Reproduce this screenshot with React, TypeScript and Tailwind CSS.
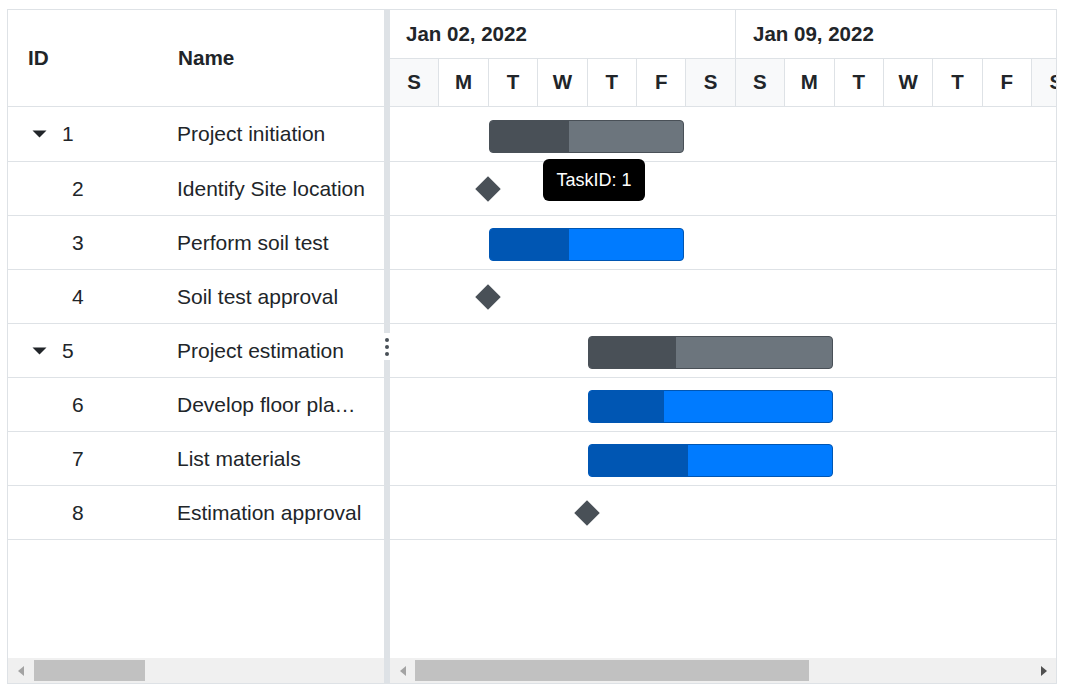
import React from "react"

type Task = { id: number; name: string; parent?: boolean }

const tasks: Task[] = [
    { id: 1, name: "Project initiation", parent: true },
    { id: 2, name: "Identify Site location" },
    { id: 3, name: "Perform soil test" },
    { id: 4, name: "Soil test approval" },
    { id: 5, name: "Project estimation", parent: true },
    { id: 6, name: "Develop floor plan for estimation" },
    { id: 7, name: "List materials" },
    { id: 8, name: "Estimation approval" },
]

const days = ["S", "M", "T", "W", "T", "F", "S", "S", "M", "T", "W", "T", "F", "S"]

// bars in px, relative to the chart body
const bars = [
    { top: 13, left: 99, width: 195, done: 79, kind: "parent" },
    { top: 121, left: 99, width: 195, done: 79, kind: "child" },
    { top: 229, left: 198, width: 245, done: 87, kind: "parent" },
    { top: 283, left: 198, width: 245, done: 75, kind: "child" },
    { top: 337, left: 198, width: 245, done: 99, kind: "child" },
]

const milestones = [
    { top: 82, left: 98 },
    { top: 190, left: 98 },
    { top: 406, left: 197 },
]

function Caret() {
    return (
        <svg width="15" height="8" viewBox="0 0 15 8" className="shrink-0">
            <path d="M0.5 0.5 L14.5 0.5 L7.5 7.5 Z" fill="#212529" />
        </svg>
    )
}

function ScrollBar({ thumbLeft, thumbWidth, rightArrow }: { thumbLeft: number; thumbWidth: number; rightArrow?: boolean }) {
    return (
        <div className="relative h-[25px] shrink-0 bg-[#f0f0f0]">
            <svg width="6" height="10" viewBox="0 0 6 10" className="absolute left-[10px] top-[8px]">
                <path d="M6 0 L0 5 L6 10 Z" fill="#a3a3a3" />
            </svg>
            <div className="absolute top-[2px] h-[21px] bg-[#c1c1c1]" style={{ left: thumbLeft, width: thumbWidth }} />
            {rightArrow && (
                <svg width="6" height="10" viewBox="0 0 6 10" className="absolute right-[9px] top-[8px]">
                    <path d="M0 0 L6 5 L0 10 Z" fill="#505050" />
                </svg>
            )}
        </div>
    )
}

export default function App() {
    return (
        <div className="pl-[7px] pt-[9px] bg-white" style={{ fontFamily: '"Liberation Sans", Arial, sans-serif' }}>
            <div className="flex w-[1050px] h-[675px] border border-[#dee2e6] text-[#212529] overflow-hidden">

                {/* grid side */}
                <div className="flex flex-col w-[376px] shrink-0">
                    <div className="flex items-center h-[97px] shrink-0 border-b border-[#dee2e6] text-[20.7px] font-bold">
                        <div className="w-[169px] pl-[20px]">ID</div>
                        <div className="pl-[1px]">Name</div>
                    </div>
                    {tasks.map((t, i) => (
                        <div key={t.id} className={`flex items-center shrink-0 border-b border-[#dee2e6] text-[21px] ${i === 0 ? "h-[55px]" : "h-[54px]"}`}>
                            <div className="w-[169px] shrink-0">
                                {t.parent ? (
                                    <div className="flex items-center pl-[24px] gap-[15px]">
                                        <Caret />
                                        <span>{t.id}</span>
                                    </div>
                                ) : (
                                    <div className="pl-[64px]">{t.id}</div>
                                )}
                            </div>
                            <div className="w-[188px] truncate">{t.name}</div>
                        </div>
                    ))}
                    <div className="flex-1" />
                    <ScrollBar thumbLeft={26} thumbWidth={111} />
                </div>

                {/* splitter */}
                <div className="relative w-[6px] shrink-0 bg-[#dee2e6]">
                    <div className="absolute left-0 top-[323px] w-[6px] h-[27px] bg-white flex flex-col items-center justify-center gap-[3px]">
                        <div className="w-[4px] h-[4px] rounded-full bg-[#495057]" />
                        <div className="w-[4px] h-[4px] rounded-full bg-[#495057]" />
                        <div className="w-[4px] h-[4px] rounded-full bg-[#495057]" />
                    </div>
                </div>

                {/* chart side */}
                <div className="flex flex-col flex-1 min-w-0 overflow-hidden">
                    <div className="flex h-[49px] shrink-0 border-b border-[#dee2e6] text-[20.5px] font-bold">
                        <div className="w-[346px] shrink-0 border-r border-[#dee2e6] pl-[16px] flex items-center">Jan 02, 2022</div>
                        <div className="w-[346px] shrink-0 pl-[17px] flex items-center">Jan 09, 2022</div>
                    </div>
                    <div className="flex h-[48px] shrink-0 border-b border-[#dee2e6] text-[20.5px] font-bold">
                        {days.map((d, i) => (
                            <div
                                key={i}
                                className={`w-[49.4px] shrink-0 border-r border-[#dee2e6] flex items-center justify-center ${d === "S" ? "bg-[#f8f9fa]" : ""}`}
                            >
                                {d}
                            </div>
                        ))}
                    </div>
                    <div className="relative flex flex-col flex-1">
                        {tasks.map((t, i) => (
                            <div key={t.id} className={`shrink-0 border-b border-[#dee2e6] ${i === 0 ? "h-[55px]" : "h-[54px]"}`} />
                        ))}
                        {bars.map((b, i) => (
                            <div
                                key={i}
                                className={`absolute h-[33px] rounded-[4px] border overflow-hidden flex ${b.kind === "parent" ? "bg-[#6c757d] border-[#495057]" : "bg-[#007bff] border-[#0056b3]"}`}
                                style={{ top: b.top, left: b.left, width: b.width }}
                            >
                                <div className={`h-full ${b.kind === "parent" ? "bg-[#495057]" : "bg-[#0056b3]"}`} style={{ width: b.done }} />
                            </div>
                        ))}
                        {milestones.map((m, i) => (
                            <div
                                key={i}
                                className="absolute w-[18px] h-[18px] -ml-[9px] -mt-[9px] rotate-45 bg-[#495057]"
                                style={{ top: m.top, left: m.left }}
                            />
                        ))}
                        <div className="absolute left-[153px] top-[52px] w-[102px] h-[42px] rounded-[6px] bg-black text-white text-[18px] flex items-center justify-center">
                            TaskID: 1
                        </div>
                        <div className="flex-1" />
                        <ScrollBar thumbLeft={25} thumbWidth={394} rightArrow />
                    </div>
                </div>
            </div>
        </div>
    )
}
